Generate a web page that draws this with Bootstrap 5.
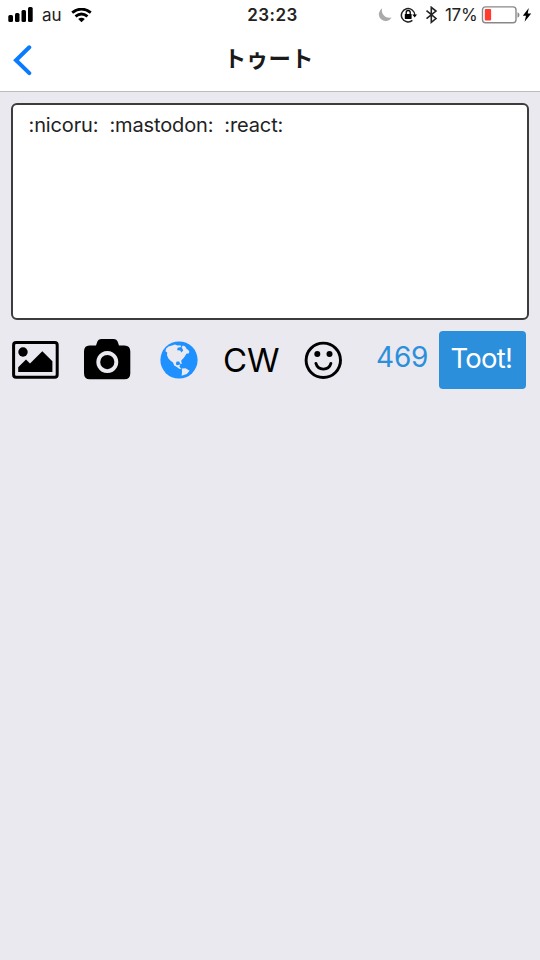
<!DOCTYPE html>
<html lang="ja">
<head>
<meta charset="utf-8">
<meta name="viewport" content="width=device-width, initial-scale=1">
<title>トゥート</title>
<link href="https://cdn.jsdelivr.net/npm/bootstrap@5.3.0/dist/css/bootstrap.min.css" rel="stylesheet">
<style>
  body { background: #e9e9ef; font-family: Inter, "Noto Sans CJK JP", sans-serif; color: #000; min-height: 960px; overflow: hidden; }
  svg { display: block; flex: none; }
  .top-area { height: 92px; border-bottom: 1px solid #bcbcc0; }
  .status-row { height: 30px; display: grid; grid-template-columns: 200px 145px 1fr; font-size: 17px; line-height: 30px; color: #222; }
  .status-left { padding-left: 8px; }
  .carrier { width: 20px; margin: 0 9px 0 9px; }
  .clock { font-weight: 600; letter-spacing: .45px; }
  .status-right { padding-left: 25px; }
  .moon { margin-left: 6px; }
  .lock-icon { margin-left: 7px; }
  .bluetooth { margin-left: 8px; }
  .percent { width: 36px; margin-left: 7px; letter-spacing: -.3px; white-space: nowrap; }
  .title-row { height: 61px; display: grid; grid-template-columns: 57px 1fr 60px; }
  .back { padding: 15px 0 0 13px; }
  .page-title { font: 700 22.4px/54px "Noto Sans CJK JP", sans-serif; color: #1a1a1a; }
  .toot-input { width: 518px; height: 217px; margin: 11px 0 0 11px; padding: 6px 16px 6px 15.5px; border: 2px solid #3c3c3c; border-radius: 6px; font-size: 20px; line-height: 29px; color: #222; resize: none; background: #fff; letter-spacing: -.13px; }
  .toot-input:focus { border-color: #3c3c3c; box-shadow: none; }
  .tools { height: 58px; margin: 11px 0 0 12px; }
  .tool { color: #000; border: 0; border-radius: 0; padding: 0; background: none; }
  .t-camera { margin-left: 25px; }
  .t-globe { margin-left: 29px; }
  .t-cw { margin-left: 25px; width: 56px; font-size: 33px; line-height: 56px; white-space: nowrap; }
  .t-face { margin-left: 25px; }
  .counter { margin-left: 34px; width: 53px; font-size: 28px; line-height: 53px; height: 58px; color: #2b8fdb; white-space: nowrap; letter-spacing: -.2px; }
  .toot-btn { margin-left: 10px; width: 86.5px; height: 58px; padding: 0 2px 3px 0; background: #2b8fdb; border: 0; border-radius: 4px; color: #fff; font-size: 27.5px; letter-spacing: -.8px; white-space: nowrap; }
</style>
</head>
<body>
<header class="top-area bg-white">
  <div class="status-row">
    <div class="status-left d-flex align-items-center">
      <svg width="25" height="16" viewBox="0 0 25 16"><rect x=".3" y="8" width="4.7" height="7" rx="1.5"/><rect x="7" y="6" width="4.5" height="9" rx="1.5"/><rect x="13.5" y="3" width="4.5" height="12" rx="1.5"/><rect x="20" y="0" width="4.7" height="15" rx="1.5"/></svg>
      <span class="carrier">au</span>
      <svg width="21" height="15" viewBox="0 0 21 15" fill="none" stroke="#000" stroke-width="2.8"><path d="M1.2 4.7Q10.5-2.5 19.8 4.7M4.5 8.4Q10.5 3.7 16.5 8.4"/><path d="M7.2 11Q10.5 8.3 13.8 11L10.5 14.2Z" fill="#000" stroke="none"/></svg>
    </div>
    <div class="clock text-center">23:23</div>
    <div class="status-right d-flex align-items-center">
      <svg class="moon" width="17" height="16" viewBox="0 0 17 16"><path d="M6.2 1.3A6.8 6.8 0 1 0 15.6 10.4C9.5 11.9 4.6 7 6.2 1.3Z" fill="#aaa"/></svg>
      <svg class="lock-icon" width="17" height="17" viewBox="0 0 17 17"><path d="M14.8 8.2A6.7 6.7 0 1 0 12.4 13.4" fill="none" stroke="#222" stroke-width="1.5"/><path d="M12.3 7.5H17L14.7 10.5Z"/><rect x="4.8" y="6.9" width="6.8" height="5" rx=".6"/><path d="M6.2 7.3V5.5a2 2 0 0 1 4 0V7.3" fill="none" stroke="#000" stroke-width="1.3"/></svg>
      <svg class="bluetooth" width="13" height="18" viewBox="0 0 13 18" fill="none" stroke="#222" stroke-width="1.6"><path d="M1.5 4.7 11 12.5 6.3 16.3V1.3L11 5 1.5 12.7"/></svg>
      <span class="percent">17%</span>
      <svg width="40" height="18" viewBox="0 0 40 18"><rect x="1.5" y=".9" width="33.5" height="15.8" rx="3" fill="#fff" stroke="#888" stroke-width="1.4"/><rect x="3.8" y="2.9" width="6.3" height="11.6" rx="1" fill="#ff3b30"/><path d="M36.5 6.2Q38.5 7 38.5 9T36.5 11.8Z" fill="#888"/></svg>
      <svg width="12" height="16" viewBox="-1 0 12 16"><path d="M6.8 1 .8 8.8H4L2.6 14.8 9.2 6.4H5.7Z"/></svg>
    </div>
  </div>
  <div class="title-row">
    <a class="back" href="#" aria-label="戻る"><svg width="20" height="31" viewBox="0 0 20 31" fill="none" stroke="#0a7aff" stroke-width="4" stroke-linecap="round"><path d="M16.3 2.3 3 15.2 16.3 28.1" stroke-linejoin="miter"/></svg></a>
    <h1 class="page-title text-center m-0">トゥート</h1>
  </div>
</header>
<main>
  <textarea class="toot-input form-control" spellcheck="false" aria-label="トゥート">:nicoru:  :mastodon:  :react:</textarea>
  <div class="tools d-flex align-items-center">
    <button class="tool" aria-label="画像"><svg width="47" height="38" viewBox="0 0 47 38"><rect x="1.6" y="1.6" width="43.6" height="34.6" rx="2.5" fill="none" stroke="#000" stroke-width="3"/><circle cx="11" cy="11" r="4.7"/><path d="M6.2 31V26.2L14 18.6 18 22.4 30.3 10.3 40.4 20.3V31Z"/></svg></button>
    <button class="tool t-camera" aria-label="カメラ"><svg width="47" height="42" viewBox="0 0 47 42"><path fill-rule="evenodd" d="M5.5 6.4H12L13.2 2.9Q14.2 0 17.5 0H29.5Q32.8 0 33.8 2.9L35 6.4H40.5Q46.3 6.4 46.3 12.4V34.2Q46.3 40.2 40.5 40.2H5.8Q0 40.2 0 34.2V12.4Q0 6.4 5.5 6.4ZM23.3 12.1a11 11 0 1 0 .01 0Z"/><circle cx="23.3" cy="23.1" r="7.1"/></svg></button>
    <button class="tool t-globe" aria-label="公開範囲"><svg width="38" height="38" viewBox="0 0 38 38"><circle cx="19" cy="19" r="18.6" fill="#1e90ff"/><path fill="#e9e9ef" d="M6.2 7.6 8.5 5.4 12 4.4 15 3.5 17.5 4.6 20.5 4.2 21.2 6 17.6 6.8 17.2 9.2 20.2 9.4 21.6 11.4 23.2 9.2 21.6 6.2 22.8 4.6 25 5.2 26.6 7.8 29.2 10 29 12.2 26.4 12.8 24.8 15.6 23.2 17.6 21.2 19.4 21.8 23 20.2 22.8 19.2 20.4 16.6 20.6 15.8 23 17 24.2 20.4 23.6 19.4 25.8 21.4 27.8 19.6 28 16.4 25.8 14.2 24.6 13 21.6 10.6 19.8 8.4 17.4 7 14.2 7.2 11.6 5.4 10.2ZM21.8 27.6 25.6 27.2 29.6 29.8 26.8 33 21.6 34.8 22 31.2Z"/></svg></button>
    <button class="tool t-cw">CW</button>
    <button class="tool t-face" aria-label="絵文字"><svg width="38" height="38" viewBox="0 0 38 38"><circle cx="19.3" cy="19.3" r="17.2" fill="none" stroke="#000" stroke-width="2.9"/><circle cx="13.3" cy="13" r="3"/><circle cx="25.5" cy="13" r="3"/><path d="M11.9 22.4C14.1 30 24.7 30 26.9 22.4" fill="none" stroke="#000" stroke-width="2.9" stroke-linecap="round"/></svg></button>
    <span class="counter">469</span>
    <button class="toot-btn btn btn-primary">Toot!</button>
  </div>
</main>
<script src="https://cdn.jsdelivr.net/npm/bootstrap@5.3.0/dist/js/bootstrap.bundle.min.js"></script>
</body>
</html>
